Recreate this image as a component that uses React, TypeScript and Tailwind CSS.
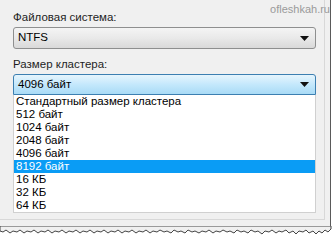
import React from 'react';

const sizes = [
  'Стандартный размер кластера',
  '512 байт',
  '1024 байт',
  '2048 байт',
  '4096 байт',
  '8192 байт',
  '16 КБ',
  '32 КБ',
  '64 КБ',
];

const Arrow: React.FC = () => (
  <svg width="9" height="5" viewBox="0 0 9 5" className="shrink-0">
    <path d="M0 0 H9 L4.5 5 Z" fill="#111" />
  </svg>
);

const TornEdge: React.FC = () => (
  <svg width="334" height="14" viewBox="0 0 334 14" className="block">
    <path
      d="M0 0 H331 V3 L328 6 L325 4 L322 7 L319 5 L316 8 L313 5 L309 7 L306 4 L303 6 L299 5 L296 8 L293 5 L289 7 L286 4 L282 6 L279 5 L276 7 L272 4 L269 6 L265 5 L262 8 L258 5 L255 6 L251 4 L248 7 L244 5 L241 6 L237 4 L234 7 L230 5 L227 6 L223 4 L220 6 L216 5 L213 7 L209 4 L206 6 L202 5 L199 7 L195 5 L192 6 L188 4 L185 7 L181 5 L178 6 L174 4 L171 7 L167 5 L164 6 L160 4 L157 6 L153 5 L150 7 L146 4 L143 6 L139 5 L136 7 L132 4 L129 6 L125 5 L122 7 L118 4 L115 6 L111 5 L108 7 L104 4 L101 6 L97 5 L94 7 L90 4 L87 6 L83 5 L80 7 L76 4 L73 6 L69 5 L66 7 L62 4 L59 6 L55 5 L52 7 L48 4 L45 6 L41 5 L38 7 L34 4 L31 6 L27 5 L24 7 L20 4 L17 6 L13 5 L10 7 L6 4 L3 6 L0 5 Z"
      fill="#f0f0f0"
      stroke="#444"
      strokeWidth="1"
    />
  </svg>
);

const App: React.FC = () => {
  return (
    <div className="w-[334px] h-[245px] bg-white overflow-hidden relative font-['Liberation_Sans',sans-serif] text-[11.5px] text-black">
      <div className="w-[331px] h-[230px] bg-[#f0f0f0] border-r border-[#5a5a5a] flex">
        <div className="w-[325px] h-[220px] border-r border-b border-[#d8d8d8] px-[13px] pt-[10px] flex flex-col">
          <div className="leading-[15px] text-[#1e1e1e]">Файловая система:</div>
          <div className="mt-[2px] h-[22px] w-[303px] rounded-[3px] border border-[#8e8f8f] bg-gradient-to-b from-[#f4f4f4] via-[#e9e9e9] to-[#d9d9d9] flex items-center justify-between pl-[4px] pr-[6px]">
            <span className="leading-none">NTFS</span>
            <Arrow />
          </div>
          <div className="mt-[8px] leading-[15px] text-[#1e1e1e]">Размер кластера:</div>
          <div className="mt-[2px] h-[21px] w-[303px] rounded-t-[3px] border border-[#3c7fb1] bg-gradient-to-b from-[#e6f5fd] via-[#c4e8fc] to-[#a9dbf6] flex items-center justify-between pl-[4px] pr-[6px]">
            <span className="leading-none">4096 байт</span>
            <Arrow />
          </div>
          <div className="w-[303px] bg-white border border-t-0 border-[#d0d0d0] flex flex-col">
            {sizes.map((s) => (
              <div
                key={s}
                className={
                  s === '8192 байт'
                    ? 'h-[13px] leading-[13px] pl-[2px] bg-[#0a9cf5] text-white'
                    : 'h-[13px] leading-[13px] pl-[2px]'
                }
              >
                {s}
              </div>
            ))}
          </div>
        </div>
      </div>
      <div className="absolute top-[1px] right-[4px] text-[11px] text-[#9a9a9a]">
        ofleshkah.ru
      </div>
      <div className="absolute left-0 top-[226px]">
        <TornEdge />
      </div>
    </div>
  );
};

export default App;
